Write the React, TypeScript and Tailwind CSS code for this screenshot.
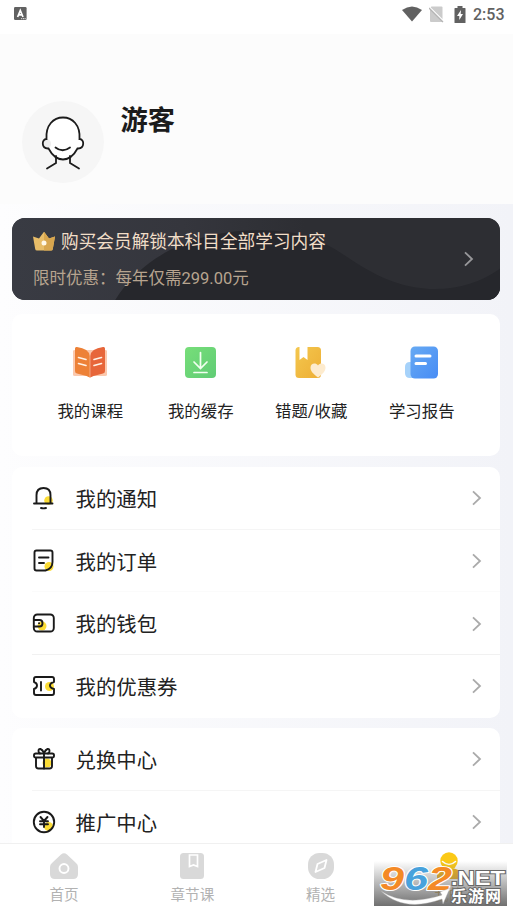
import type { ReactNode } from 'react';

function Chevron({ className = '' }: { className?: string }) {
  return (
    <svg className={`shrink-0 ${className}`} width="10" height="16" viewBox="0 0 10 16" fill="none" stroke="currentColor" strokeWidth="1.8">
      <path d="M1 1.300 8 8 1 14.700" />
    </svg>
  );
}

function StatusBar() {
  return (
    <div className="flex h-[34px] shrink-0 items-start justify-between bg-white pl-[14px] pr-[9px] pt-[7px] text-[#616161]">
      <svg width="13" height="14" viewBox="0 0 13 14">
        <rect width="12.600" height="13" rx="1.200" fill="#616161" />
        <path d="M3.600 10 6.300 3.500 9 10M4.600 7.800h3.400" fill="none" stroke="#fff" strokeWidth="1.700" />
        <path d="M7.200 11.700h5" stroke="#fff" strokeWidth="1" strokeDasharray="1 .7" />
      </svg>
      <div className="flex h-[14px] items-center">
        <svg width="20" height="16" viewBox="0 0 20 16" className="mr-[7px]">
          <path d="M0 4Q10-3 20 4L10 15.500Z" fill="#616161" />
        </svg>
        <svg width="15" height="17" viewBox="0 0 15 17" className="mr-[10px]">
          <path d="M2.500.5h10q1 0 1 1v13.500q0 1-1 1H2q-1 0-1-1V2Z" fill="#cbcbcb" />
          <path d="m0 .8 14.500 14.400" stroke="#fff" strokeWidth="1.600" />
          <path d="m0 2 14 14" stroke="#b5b5b5" strokeWidth="1.300" />
        </svg>
        <svg width="12" height="17" viewBox="0 0 12 17" className="mr-[7px]">
          <path d="M3.500 0h5v2H11q.5 0 .5.500v14q0 .5-.5.500H1q-.5 0-.5-.5v-14Q.5 2 1 2h2.500Z" fill="#616161" />
          <path d="M7 4 3 10h2.300v4L9 8H6.700Z" fill="#fff" />
        </svg>
        <span className="mt-px w-[31px] whitespace-nowrap font-[Roboto] text-[16px] font-medium leading-4">2:53</span>
      </div>
    </div>
  );
}

function Avatar() {
  return (
    <svg width="82" height="82" viewBox="0 0 82 82" className="shrink-0">
      <circle cx="41" cy="41" r="41" fill="#f6f6f6" />
      <path d="M24.500 38c-1-14 7-21.500 16.500-21.500S58.500 24 57.500 38c5 0 5.500 10-2 9.500C52 54 47 58.500 41 58.500S30 54 26.500 47.500c-7.500.5-7-9.500-2-9.500Z" fill="#fff" />
      <path d="M24.500 38c5 0 6 7 2 9.500-7 .5-7-9-2-9.500Z" fill="#ededed" />
      <g fill="none" stroke="#1c1c1c" strokeWidth="1.800" strokeLinecap="round">
        <path d="M24.500 38c-1-14 7-21.500 16.500-21.500S58.500 24 57.500 38c5 0 5.500 10-2 9.500C52 54 47 58.500 41 58.500S30 54 26.500 47.500c-7.500.5-7-9.500-2-9.500Z" />
        <path d="M33.500 46.500q7 5.500 14.500 0M34 55v7l-9 5.500M48 55v7l9 5.500" />
      </g>
    </svg>
  );
}

function Banner() {
  return (
    <section className="relative h-[82px] shrink-0 overflow-hidden rounded-[13px] bg-[#2d2e33] text-[#f1dec8]">
      <svg className="absolute inset-0" width="489" height="82" viewBox="0 0 488 82" preserveAspectRatio="none">
        <defs>
          <linearGradient id="bannerShade">
            <stop offset="0" stopColor="#393b43" />
            <stop offset=".35" stopColor="#35363d" />
            <stop offset=".6" stopColor="#2d2e33" />
          </linearGradient>
        </defs>
        <path d="M0 0h488v82H0Z" fill="url(#bannerShade)" />
        <path d="M103 82C140 22 216 5 282 15C322 24 332 42 371 60C410 77 454 75 488 50V82Z" fill="#26272c" />
      </svg>
      <div className="relative flex h-full items-center justify-between pl-[21px] pr-[26px]">
        <div className="pt-[3px]">
          <div className="flex h-[25px] items-center gap-[6px] text-[17.67px] leading-[25px]">
            <svg width="22" height="20" viewBox="0 0 22 20" className="-mt-[4px]">
              <path d="M0 5.500 6 7.500 11 .8 16 7.500 22 5.500 19.800 18Q19.600 19.500 18 19.500H4Q2.400 19.500 2.200 18Z" fill="#e8bd68" />
              <path d="M11 .8 16 7.500 22 5.500 19.800 18Q19.600 19.500 18 19.500H11Z" fill="#d8a64e" />
              <circle cx="11" cy="12" r="2.500" fill="#fff8e8" />
            </svg>
            <span className="whitespace-nowrap">购买会员解锁本科目全部学习内容</span>
          </div>
          <div className="mt-[12px] h-6 whitespace-nowrap text-[16.500px] leading-6 text-[#b7a48f]">{'限时优惠\uFF1A每年仅需299.00元'}</div>
        </div>
        <Chevron className="-mt-px text-[#98989b]" />
      </div>
    </section>
  );
}

const shortcuts: { label: string; icon: ReactNode }[] = [
  {
    label: '我的课程',
    icon: (
      <>
        <path d="M1 5Q1 4 3 4h30q2 0 2 1v24q0 1-2 1H20l-2 2-2-2H3q-2 0-2-1Z" fill="#fbc9ae" />
        <path d="M3 2.500Q3 .5 5 1q12 1.500 12.700 9v21.500q-3-2-7-2.500L5 27.500Q3 27 3 25Z" fill="#ed8137" />
        <path d="M33 2.500Q33 .5 31 1q-12 1.500-12.700 9v21.500q3-2 7-2.500l5.700-1.500q2-.5 2-2.500Z" fill="#e7663a" />
        <path d="m6.500 11.500 7.500 2M6.500 17.500l7.500 2M29.500 11.500l-7.500 2M29.500 17.500l-7.500 2" stroke="#fff2e6" strokeWidth="1.600" strokeLinecap="round" />
      </>
    ),
  },
  {
    label: '我的缓存',
    icon: (
      <>
        <defs><linearGradient id="greenTile" x1="0" y1="0" x2="1" y2="1"><stop stopColor="#77de79" /><stop offset="1" stopColor="#60cc75" /></linearGradient></defs>
        <rect x="2" y="1" width="31" height="31" rx="4" fill="url(#greenTile)" />
        <path d="M17.500 6.500v15.500M11 16 17.500 22.500 24 16M11 26.500h13" fill="none" stroke="#f2fff0" strokeWidth="1.700" strokeLinecap="round" />
      </>
    ),
  },
  {
    label: '错题/收藏',
    icon: (
      <>
        <defs><linearGradient id="goldBook" x1="0" y1="0" x2="1" y2="1"><stop stopColor="#f4c74e" /><stop offset="1" stopColor="#edae35" /></linearGradient></defs>
        <rect x="2.500" y="1" width="25.500" height="31" rx="3.500" fill="url(#goldBook)" />
        <path d="M6.500 1h8v13l-4-3-4 3Z" fill="#fff" />
        <path d="M25 31.500C20.500 28 17.500 25.500 17.500 21.500c0-4 5-5.500 7.500-2 2.500-3.500 7.500-2 7.500 2 0 4-3 6.500-7.500 10Z" fill="#fdebce" />
      </>
    ),
  },
  {
    label: '学习报告',
    icon: (
      <>
        <defs><linearGradient id="blueSheet" x1="0" y1="0" x2="1" y2="1"><stop stopColor="#67aaf3" /><stop offset="1" stopColor="#478cf5" /></linearGradient></defs>
        <path d="M12 16H6q-5 0-5 5v6q0 5 5 5H14Z" fill="#a6d2fa" />
        <rect x="6.500" y=".5" width="27.500" height="32" rx="4.500" fill="url(#blueSheet)" />
        <path d="M12 10h14M12 17.500h9.500" stroke="#fff" strokeWidth="3" strokeLinecap="round" />
      </>
    ),
  },
];

function Shortcuts() {
  return (
    <section className="mt-[14px] grid h-[142px] shrink-0 grid-cols-4 rounded-[10px] bg-white px-[23px] pt-[32px]">
      {shortcuts.map(({ label, icon }) => (
        <div key={label} className="flex flex-col items-center">
          <svg className="shrink-0" width="36" height="34" viewBox="0 0 36 34">{icon}</svg>
          <span className="mt-[19px] whitespace-nowrap text-[16.400px] leading-[26px] text-[#222]">{label}</span>
        </div>
      ))}
    </section>
  );
}

type Row = { label: string; icon: ReactNode; line?: string };

const accountRows: Row[] = [
  {
    label: '我的通知',
    line: 'bg-[#f5f5f5]',
    icon: (
      <>
        <circle cx="16.500" cy="14.500" r="4.300" fill="#fbdc35" />
        <path d="M4.500 17.200v-8C4.500 4.500 7.300 2 11.500 2s7 2.500 7 7.200v8M2 17.500h18.500M9 22q2.500.8 5 0" />
      </>
    ),
  },
  {
    label: '我的订单',
    line: 'bg-[#fbfbfb]',
    icon: (
      <>
        <circle cx="17" cy="17.500" r="4.500" fill="#fbdc35" />
        <path d="M20.500 13V3.500q0-2-2-2H4.500Q2.500 1.500 2.500 3.500v16q0 2 2 2h9q7-2 7-8.500ZM7 8.500h9.500M7 14h5" />
      </>
    ),
  },
  {
    label: '我的钱包',
    line: 'bg-[#f1f1f1]',
    icon: (
      <>
        <circle cx="10" cy="14" r="4.500" fill="#fbdc35" />
        <rect x="1.800" y="2.500" width="20" height="17" rx="3.500" />
        <path d="M2 8h5.500c4 0 4 6.500 0 6.500H2" />
        <path d="M7 11.300h.1" />
      </>
    ),
  },
  {
    label: '我的优惠券',
    icon: (
      <>
        <circle cx="17.500" cy="12.500" r="4.500" fill="#fbdc35" />
        <path d="M4 3h16q2 0 2 2v3q-4 1-4 3.500t4 3.500v4q0 2-2 2H4q-2 0-2-2v-4q3-1 3-3.500T2 8V5q0-2 2-2ZM9 8v8.500" />
      </>
    ),
  },
];

const centerRows: Row[] = [
  {
    label: '兑换中心',
    line: 'bg-[#f5f5f5]',
    icon: (
      <>
        <circle cx="15" cy="16" r="4.500" fill="#fbdc35" />
        <path d="M4 11v8q0 2.500 2.500 2.500h11q2.500 0 2.500-2.500v-8" />
        <rect x="2" y="6.500" width="20" height="4" rx="1.800" />
        <path d="M12 7v14.500M12 6C10 1.500 6.500.5 6.500 4q0 2 1.500 2.500M12 6c2-4.500 5.500-5.500 5.500-2q0 2-1.500 2.500" />
      </>
    ),
  },
  {
    label: '推广中心',
    icon: (
      <>
        <circle cx="16.500" cy="16.500" r="4.500" fill="#fbdc35" />
        <path d="M12 1.800a10.200 10.200 0 1 0 0 20.400a10.200 10.200 0 1 0 0-20.400Z" />
        <path d="m8.500 7 3.500 4 3.500-4M12 11v6M8 11.200h8M8 14.200h8" />
      </>
    ),
  },
];

function MenuRow({ label, icon, line }: Row) {
  return (
    <div className="flex h-[62.700px] shrink-0 flex-col pl-[20px]">
      <div className="flex flex-1 items-center pr-[18px]">
        <svg className="shrink-0 [&>circle]:stroke-none" width="24" height="24" viewBox="0 0 24 24" fill="none" stroke="#1a1a1a" strokeWidth="1.900" strokeLinecap="round" strokeLinejoin="round">{icon}</svg>
        <span className="ml-[19.500px] mt-[3px] flex-1 whitespace-nowrap text-[20.400px] leading-[30px] text-[#222]">{label}</span>
        <Chevron className="text-[#aaa]" />
      </div>
      {line && <div className={`-mt-px h-px shrink-0 ${line}`} />}
    </div>
  );
}

function SiteBadge() {
  return (
    <div className="absolute bottom-[6px] right-[6px] h-[45px] w-[133px] bg-gradient-to-b from-[#707070]/0 to-[#707070]">
      <svg className="overflow-visible" width="133" height="45" viewBox="0 4 133 45">
        <g fontFamily="Liberation Sans, sans-serif" fontWeight="700" fontStyle="italic" fontSize="34" stroke="#fff" strokeWidth="2" paintOrder="stroke" strokeLinejoin="round">
          <text x="6" y="33" fill="#f48a26" textLength="24" lengthAdjust="spacingAndGlyphs">9</text>
          <text x="30" y="33" fill="#48a2dc" textLength="24" lengthAdjust="spacingAndGlyphs">6</text>
          <text x="54" y="33" fill="#f48a26" textLength="24" lengthAdjust="spacingAndGlyphs">2</text>
        </g>
        <path d="M7 34Q31 50 68 38L66 35l10-4-7 16-1-5Q30 56 7 34Z" fill="#fff" stroke="#aaa" strokeWidth=".4" />
        <g fill="#fff" stroke="#686868" strokeWidth="2" paintOrder="stroke" fontWeight="700">
          <text x="77" y="28" fontFamily="Liberation Sans, sans-serif" fontSize="20" textLength="54" lengthAdjust="spacingAndGlyphs">.NET</text>
          <text x="77" y="45" fontFamily="Noto Sans CJK SC, sans-serif" fontSize="16" textLength="50">乐游网</text>
        </g>
      </svg>
    </div>
  );
}

const tabs: { label: string; icon: ReactNode; active?: boolean }[] = [
  {
    label: '首页',
    icon: (
      <>
        <path d="M12 1.500q3-2.500 6 0l9 8.500q2 1.500 2 4V21q0 5-5 5H6q-5 0-5-5v-7q0-2.500 2-4Z" />
        <circle cx="15" cy="15.500" r="4.500" fill="none" stroke="#fff" strokeWidth="1.900" />
      </>
    ),
  },
  {
    label: '章节课',
    icon: (
      <>
        <rect x="3" y="0" width="24" height="26" rx="3.500" />
        <path d="M12.500 2h8v11.500l-4-1.500-4 1.500Z" fill="none" stroke="#fff" strokeWidth="1.700" />
      </>
    ),
  },
  {
    label: '精选',
    icon: (
      <>
        <rect x="2" y="0" width="26" height="26" rx="11.500" />
        <path d="m20.500 7-2 8-9 4 2-8Z" fill="none" stroke="#fff" strokeWidth="1.800" strokeLinejoin="round" />
      </>
    ),
  },
  {
    label: '我的',
    active: true,
    icon: (
      <>
        <path d="M3 26v-3q0-8 12-8t12 8v3Z" fill="#f2b318" />
        <circle cx="15" cy="8" r="8.700" fill="#fbc916" />
        <path d="M8.500 8.500q6.500 6 13 0" fill="none" stroke="#fff" strokeWidth="1.600" strokeLinecap="round" />
      </>
    ),
  },
];

function TabBar() {
  return (
    <nav className="relative grid h-[69px] shrink-0 grid-cols-4 border-t border-[#f0f0f0] bg-white pt-[9px]">
      {tabs.map(({ label, icon, active }) => (
        <div key={label} className="flex flex-col items-center">
          <svg width="30" height="27" viewBox="0 0 30 27" fill="#d9d9d9" className="overflow-visible">{icon}</svg>
          <span className={`mt-[4.500px] whitespace-nowrap text-[14.600px] leading-[21px] ${active ? 'text-[#c79c39]' : 'text-[#b2b2b2]'}`}>{label}</span>
        </div>
      ))}
      <SiteBadge />
    </nav>
  );
}

export default function App() {
  return (
    <div className="flex h-[912px] w-[513px] flex-col overflow-hidden bg-white font-[Roboto,'Noto_Sans_CJK_SC',sans-serif]">
      <StatusBar />
      <header className="flex h-[170px] shrink-0 bg-[#fcfcfc] pl-[22px] pt-[67px]">
        <Avatar />
        <h1 className="ml-[16.500px] mt-px h-[38px] text-[27.200px] font-bold leading-[38px] text-[#1b1b1b]">游客</h1>
      </header>
      <main className="flex min-h-0 flex-1 flex-col overflow-hidden bg-gradient-to-r from-[#fdfdfe] to-[#f2f3f8] pl-[12px] pr-[13px] pt-[14px]">
        <Banner />
        <Shortcuts />
        <section className="mt-[11px] h-[251px] shrink-0 rounded-[10px] bg-white">
          {accountRows.map((row) => <MenuRow key={row.label} {...row} />)}
        </section>
        <section className="mt-[10px] shrink-0 rounded-t-[10px] bg-white">
          {centerRows.map((row) => <MenuRow key={row.label} {...row} />)}
        </section>
      </main>
      <TabBar />
    </div>
  );
}
